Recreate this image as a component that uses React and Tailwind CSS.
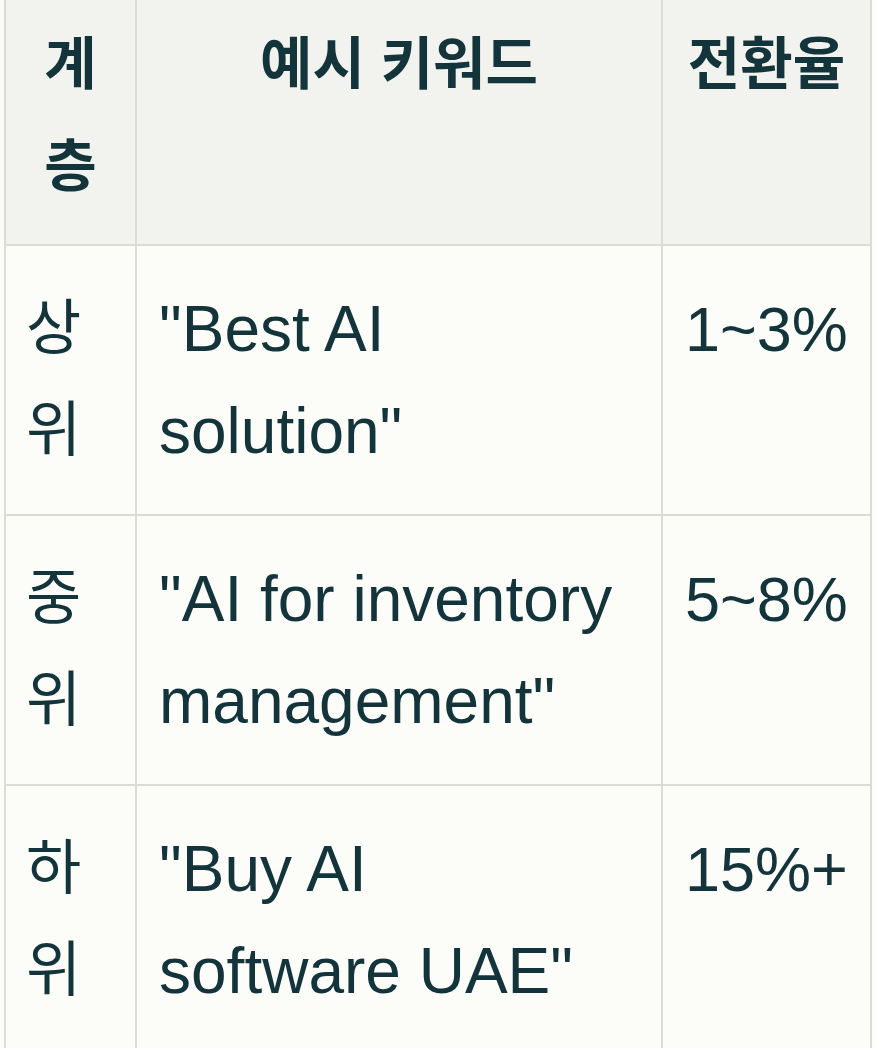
import React from 'react';

const rows = [
  { tier: '상위', keyword: '"Best AI solution"', rate: '1~3%' },
  { tier: '중위', keyword: '"AI for inventory management"', rate: '5~8%' },
  { tier: '하위', keyword: '"Buy AI software UAE"', rate: '15%+' },
];

const font = { fontFamily: '"Liberation Sans", "Noto Sans CJK KR", sans-serif' };

export default function App() {
  return (
    <div className="w-[876px] h-[1048px] overflow-hidden bg-[#fcfcf9]" style={font}>
      <table className="ml-[4px] w-[866px] table-fixed border-collapse leading-[102px] text-[#13343b]">
        <colgroup>
          <col className="w-[131px]" />
          <col className="w-[526px]" />
          <col className="w-[209px]" />
        </colgroup>
        <thead>
          <tr className="bg-[#f2f2ee] text-[57px]">
            <th className="border-2 border-t-0 border-[#dcdcd6] px-[22px] pt-[13px] pb-[27px] align-top text-center font-bold">계층</th>
            <th className="border-2 border-t-0 border-[#dcdcd6] px-[22px] pt-[13px] pb-[27px] align-top text-center font-bold">예시 키워드</th>
            <th className="whitespace-nowrap border-2 border-t-0 border-[#dcdcd6] px-[10px] pt-[13px] pb-[27px] align-top text-center font-bold">전환율</th>
          </tr>
        </thead>
        <tbody>
          {rows.map((r) => (
            <tr key={r.tier}>
              <td className="border-2 border-[#dcdcd6] pl-[20px] pr-[10px] py-[32px] align-top text-[60px]">{r.tier}</td>
              <td className="border-2 border-[#dcdcd6] pl-[22px] pr-[40px] py-[32px] align-top text-[64px]">{r.keyword}</td>
              <td className="border-2 border-[#dcdcd6] px-[22px] py-[32px] align-top text-[63px]">{r.rate}</td>
            </tr>
          ))}
        </tbody>
      </table>
    </div>
  );
}
